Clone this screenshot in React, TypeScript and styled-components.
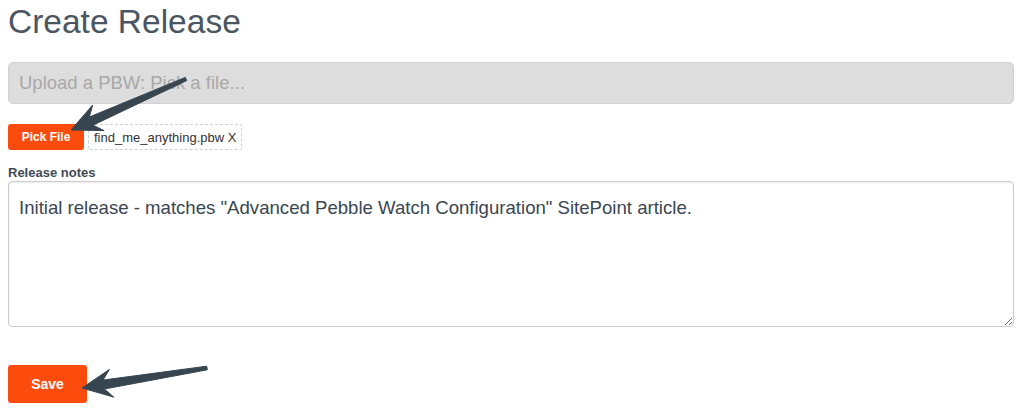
import React from "react";
import styled, { createGlobalStyle } from "styled-components";

const Global = createGlobalStyle`
  html, body { margin: 0; padding: 0; background: #ffffff; }
  body { font-family: "Liberation Sans", Arial, Helvetica, sans-serif; }
  * { box-sizing: border-box; }
`;

const Page = styled.div`
  position: relative;
  width: 1024px;
  height: 415px;
  padding: 0 10px 0 8px;
  overflow: hidden;
`;

const Title = styled.h1`
  margin: 4px 0 0 0;
  font-size: 33.5px;
  line-height: 36px;
  font-weight: 400;
  color: #4a5661;
`;

const UploadInput = styled.input`
  display: block;
  width: 100%;
  height: 42px;
  margin-top: 22px;
  padding: 0 10px;
  border: 1px solid #d2d2d2;
  border-radius: 5px;
  background: #dddddd;
  font-family: inherit;
  font-size: 18.5px;
  color: #555;
  outline: none;
  &::placeholder { color: #a8a8a8; }
`;

const FileRow = styled.div`
  display: flex;
  align-items: stretch;
  gap: 4px;
  height: 26px;
  margin-top: 20px;
`;

const OrangeButton = styled.button<{ $big?: boolean }>`
  display: flex;
  align-items: center;
  justify-content: center;
  width: ${(p) => (p.$big ? "79px" : "76px")};
  height: ${(p) => (p.$big ? "38px" : "26px")};
  padding: 0;
  border: none;
  border-radius: 3px;
  background: #fb4c0d;
  color: #ffffff;
  font-family: inherit;
  font-weight: 700;
  font-size: ${(p) => (p.$big ? "14px" : "12px")};
  cursor: pointer;
`;

const FileName = styled.div`
  display: flex;
  align-items: center;
  padding: 0 5px;
  border: 1px dashed #cfcfcf;
  border-radius: 2px;
  font-size: 13px;
  color: #333;
`;

const Label = styled.label`
  display: block;
  margin-top: 14px;
  font-size: 13px;
  line-height: 17px;
  font-weight: 700;
  color: #3f4a54;
`;

const Notes = styled.textarea`
  display: block;
  width: 100%;
  height: 146px;
  margin-top: 0px;
  padding: 14px 10px 8px;
  border: 1px solid #cccccc;
  border-radius: 4px;
  box-shadow: inset 0 1px 2px rgba(0, 0, 0, 0.08);
  font-family: inherit;
  font-size: 18.6px;
  line-height: 24px;
  color: #3a4652;
  resize: vertical;
  outline: none;
`;

const SaveRow = styled.div`
  margin-top: 38px;
`;

const Overlay = styled.svg`
  position: absolute;
  left: 0;
  top: 0;
  pointer-events: none;
`;

type Pt = [number, number];

function arrowPath(tail: Pt, tip: Pt): string {
  const dx = tail[0] - tip[0];
  const dy = tail[1] - tip[1];
  const L = Math.hypot(dx, dy);
  const ux = dx / L;
  const uy = dy / L;
  const px = -uy;
  const py = ux;
  const at = (s: number, o: number): string =>
    `${(tip[0] + ux * s + px * o).toFixed(1)},${(tip[1] + uy * s + py * o).toFixed(1)}`;
  return [
    `M${at(0, 0)}`,
    `L${at(30, 14)}`,
    `L${at(22, 4.5)}`,
    `L${at(L, 1.8)}`,
    `L${at(L, -1.8)}`,
    `L${at(22, -4.5)}`,
    `L${at(30, -14)}`,
    "Z",
  ].join(" ");
}

export default function App() {
  return (
    <>
      <Global />
      <Page>
        <Title>Create Release</Title>
        <UploadInput readOnly placeholder="Upload a PBW: Pick a file..." />
        <FileRow>
          <OrangeButton type="button">Pick File</OrangeButton>
          <FileName>find_me_anything.pbw X</FileName>
        </FileRow>
        <Label htmlFor="notes">Release notes</Label>
        <Notes
          id="notes"
          defaultValue={'Initial release - matches "Advanced Pebble Watch Configuration" SitePoint article.'}
        />
        <SaveRow>
          <OrangeButton type="button" $big>
            Save
          </OrangeButton>
        </SaveRow>
        <Overlay width="1024" height="415" viewBox="0 0 1024 415">
          <path d={arrowPath([186, 79], [71, 130])} fill="#36454f" strokeLinejoin="round" stroke="#36454f" strokeWidth="1" />
          <path d={arrowPath([207, 368], [82, 388])} fill="#36454f" strokeLinejoin="round" stroke="#36454f" strokeWidth="1" />
        </Overlay>
      </Page>
    </>
  );
}
